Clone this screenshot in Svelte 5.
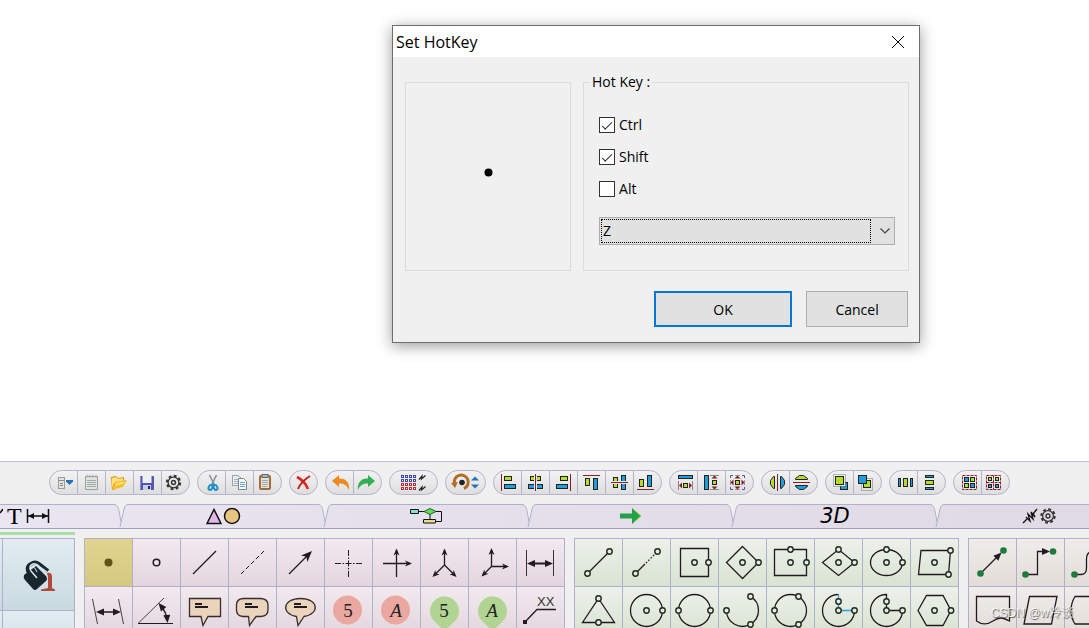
<script lang="ts">
  type Tool = { name: string; art: string };
  type Group = { tools: Tool[]; width?: 'wide' | 'medium' };

  let ctrl = $state(true);
  let shift = $state(true);
  let alt = $state(false);
  let key = $state('Z');
  let open = $state(true);
  let activeTool = $state('Point');

  const keys = 'ABCDEFGHIJKLMNOPQRSTUVWXYZ'.split('');

  const INK = '#222';
  const LIME = '#b4dc28';
  const BLUE = '#1e9fdc';
  const RED = '#8c1c2c';

  const box = (x: number, y: number, w: number, h: number, fill: string) =>
    `<rect x="${x}" y="${y}" width="${w}" height="${h}" fill="${fill}" stroke="${INK}"/>`;
  const path = (d: string, stroke = '#221a20', extra = '') =>
    `<path d="${d}" fill="none" stroke="${stroke}" stroke-width="1.3" ${extra}/>`;
  const thin = (d: string, stroke: string, extra = '') =>
    `<path d="${d}" fill="none" stroke="${stroke}" ${extra}/>`;
  const solid = (d: string, fill = '#221a20') => `<path d="${d}" fill="${fill}"/>`;
  const ring = (x: number, y: number) =>
    `<circle cx="${x}" cy="${y}" r="2.7" fill="#e4ebe0" stroke="#20281c" stroke-width="1.4"/>`;
  const dot = (x: number, y: number) => `<circle cx="${x}" cy="${y}" r="3.3" fill="#1f7a3c"/>`;

  // arrow head with its tip at x, y, pointing right before it is turned
  const head = (x: number, y: number, turn: number) =>
    `<path d="M0 0L-7 -3L-5 0L-7 3Z" fill="#221a20" transform="translate(${x} ${y}) rotate(${turn})"/>`;
  const wedge = (x: number, y: number, turn: number) =>
    `<path d="M0 0L-8 -3.5V3.5Z" fill="#221a20" transform="translate(${x} ${y}) rotate(${turn})"/>`;

  const gear = (x: number, y: number) =>
    `<circle cx="${x}" cy="${y}" r="6.7" fill="none" stroke="#333" stroke-width="2" stroke-dasharray="2.9 2.36"/>` +
    `<circle cx="${x}" cy="${y}" r="5.4" fill="none" stroke="#333" stroke-width="1.3"/>` +
    `<circle cx="${x}" cy="${y}" r="2" fill="none" stroke="#333" stroke-width="1.4"/>`;

  const tri = (x: number, y: number, turn: number, fill = RED) =>
    `<path d="M0 0L-3 -3V3Z" fill="${fill}" transform="translate(${x} ${y}) rotate(${turn})"/>`;

  let gridDots = '';
  for (let row = 0; row < 4; row++) {
    for (let col = 0; col < 4; col++) {
      gridDots += `<rect x="${11.5 + col * 4}" y="${4.5 + row * 4}" width="2" height="2" fill="#f0f0f0" stroke="${row < 2 ? '#3c48a8' : '#b83038'}"/>`;
    }
  }

  const groups: Group[] = [
    {
      tools: [
        { name: 'Menu', art: `<rect x="8.5" y="6.5" width="6" height="11" fill="#e4e4e4" stroke="#999"/><path d="M9 9.5h5M10 12.5h3M10 14.5h3" stroke="#888"/>` + solid('M16 9H23V10.5L19.5 14L16 10.5Z', '#1f74b8') },
        { name: 'New', art: `<path d="M7.5 5.5H19.5V18.5H7.5Z" fill="#dfe3e2" stroke="#9aa09e"/><path d="M9 3.5v3M12 3.5v3M15 3.5v3M18 3.5v3M9 9.5h9M9 11.5h9M9 13.5h9M9 15.5h9" stroke="#a3aaa8"/>` },
        { name: 'Open', art: solid('M5 6L10 5L12 7L18 6V11L8 19H6Z', '#d89a18') + solid('M6 7L10 6L12 8L17 7V10L8 12L6 17Z', '#ffe07a') + solid('M9 11L21 9L17 16L6 19Z', '#f7bc2c') + solid('M10 12L19 10.5L17 13L9 15Z', '#ffdf70') },
        { name: 'Save', art: `<rect x="6" y="5" width="14" height="14" rx="1" fill="#5356ad"/><rect x="8.5" y="5" width="9" height="7" fill="#eef0f8"/><rect x="9" y="14" width="8" height="5" fill="#c9cce8"/><rect x="14" y="15" width="2" height="3" fill="#25285c"/><path d="M6.5 6v12" stroke="#8b8de0"/>` },
        { name: 'Settings', art: gear(11.5, 11.5) }
      ]
    },
    {
      tools: [
        { name: 'Cut', art: `<path d="M11.5 4L16.500 14M18.500 4L13.500 14" stroke="#8a8f9c" stroke-width="1.6"/><ellipse cx="12.5" cy="16.5" rx="1.8" ry="2.5" fill="none" stroke="#2090d0" stroke-width="2" transform="rotate(25 12.5 16.5)"/><ellipse cx="17.5" cy="16.5" rx="1.8" ry="2.5" fill="none" stroke="#2090d0" stroke-width="2" transform="rotate(-25 17.5 16.5)"/><path d="M14 14L15 11L16 14Z" fill="#2090d0"/>` },
        { name: 'Copy', art: `<path d="M6.5 4.5H12L15.5 7.5V14.5H6.5Z" fill="#eef1f3" stroke="#9aa2a8"/><path d="M8 8.5h5M8 10.5h5M8 12.5h5" stroke="#9db4c4"/><path d="M12.5 7.5H17.5L20.5 10.5V18.5H12.5Z" fill="#f5f9fc" stroke="#7c8890"/><path d="M14 11.5h5M14 13.5h5M14 15.5h5" stroke="#6da4cc"/>` },
        { name: 'Paste', art: `<rect x="6" y="5" width="10" height="13" rx="1" fill="#e4e4dc" stroke="#a06c3c" stroke-width="2"/><rect x="8" y="3.5" width="6" height="3" fill="#b8b8b8" stroke="#666"/><path d="M8 9.5h6M8 11.5h6M8 13.5h6M8 15.5h5" stroke="#a0a8a8"/>` }
      ]
    },
    {
      tools: [{ name: 'Delete', art: `<path d="M7 6C11 8 16 13 18 18" stroke="#d82828" stroke-width="2.6" fill="none"/><path d="M20 5C15 8 10 13 8 18" stroke="#c42020" stroke-width="2" fill="none"/>` }]
    },
    {
      tools: [
        { name: 'Undo', art: solid('M6 10L13 4V7.5C20 7 24 12 23 19C21 14 18 12.5 13 12.5V16Z', '#ec8a20') },
        { name: 'Redo', art: solid('M21 10L14 4V7.5C7 7 3 12 4 19C6 14 9 12.5 14 12.5V16Z', '#32b058') }
      ]
    },
    {
      width: 'wide',
      tools: [{ name: 'Grid', art: gridDots + `<path d="M29 8.5L32 5L31.5 8L35.5 4.5M29 19.5L32 16L31.5 19L35.5 15.5" fill="none" stroke="#222" stroke-width="1.2"/>` }]
    },
    {
      width: 'medium',
      tools: [{ name: 'Rotate', art: `<path d="M8.5 13A7 7 0 1 1 18 17.5" fill="none" stroke="#b46c24" stroke-width="3"/><path d="M5 12L12 11L9 17Z" fill="#b46c24"/><circle cx="16" cy="11.5" r="2.8" fill="#222"/>` + solid('M25 9.5L29 5.500L33 9.5ZM25 13.5L29 17.5L33 13.5Z', '#1f74b8') }]
    },
    {
      tools: [
        { name: 'Align left', art: thin('M7.5 3V20', RED) + box(10.5, 5.5, 7, 4, LIME) + box(10.5, 13.5, 11, 4, BLUE) },
        { name: 'Align centre', art: box(8.5, 5.5, 10, 4, LIME) + box(6.5, 13.5, 14, 4, BLUE) + solid('M12 4h3v7h-3ZM12 12h3v7h-3Z', '#e8e8e8') + thin('M13.5 3V20', RED) },
        { name: 'Align right', art: thin('M20.5 3V20', RED) + box(10.5, 5.5, 7, 4, LIME) + box(6.5, 13.5, 11, 4, BLUE) },
        { name: 'Align top', art: thin('M5 4.5H22', RED) + box(7.5, 7.5, 4, 7, LIME) + box(15.5, 7.5, 4, 11, BLUE) },
        { name: 'Align middle', art: box(7.5, 6.5, 4, 10, LIME) + box(15.5, 4.5, 4, 14, BLUE) + solid('M6 10h7v3h-7ZM14 10h7v3h-7Z', '#e8e8e8') + thin('M5 11.5H22', RED) },
        { name: 'Align bottom', art: thin('M3 18.5H20', RED) + box(5.5, 8.5, 4, 7, LIME) + box(13.5, 4.5, 4, 11, BLUE) }
      ]
    },
    {
      tools: [
        { name: 'Same width', art: box(8.5, 4.5, 14, 3, BLUE) + thin('M8.5 10V19M22.5 10V19', '#888') + box(13.5, 12.5, 4, 4, LIME) + tri(9, 14.5, 180) + tri(22, 14.5, 0) },
        { name: 'Same height', art: box(6.5, 4.5, 4, 14, BLUE) + thin('M12 4.5H21M12 18.5H21', '#888') + box(14.5, 9.5, 4, 4, LIME) + tri(16.5, 4.5, 270) + tri(16.5, 18.5, 90) },
        { name: 'Same size', art: thin('M4.5 7V4.5H7M16 4.5H18.5V7M18.5 16V18.5H16M7 18.5H4.5V16', '#5054b8') + thin('M9 4.5h5M9 18.5h5M4.5 9v5M18.5 9v5', '#999') + box(9.5, 9.5, 4, 4, LIME) + tri(11.5, 4.5, 270) + tri(11.5, 18.5, 90) + tri(4.5, 11.5, 180) + tri(18.5, 11.5, 0) }
      ]
    },
    {
      tools: [
        { name: 'Flip horizontal', art: `<path d="M12.5 5.5V17.5H11.5L8.5 13.5V9.5L11.5 5.5Z" fill="${LIME}" stroke="${INK}"/><path d="M18.5 5.5V17.5H19.5L22.5 13.5V9.5L19.5 5.5Z" fill="${BLUE}" stroke="${INK}"/>` + thin('M15.5 3V20', RED) },
        { name: 'Flip vertical', art: `<path d="M5.5 8.5H17.5V7.5L13.5 4.5H9.5L5.5 7.5Z" fill="${LIME}" stroke="${INK}"/><path d="M5.5 14.5H17.5V15.5L13.5 18.5H9.5L5.5 15.5Z" fill="${BLUE}" stroke="${INK}"/>` + thin('M3 11.5H20', RED) }
      ]
    },
    {
      tools: [
        { name: 'Bring to front', art: box(14.5, 11.5, 7, 7, BLUE) + solid('M11 7h8v8h-8Z', '#e8e8e8') + thin('M7.5 3.5H19.5V15.5H7.5Z', '#777', 'stroke-dasharray="1 1"') + box(9.5, 5.5, 8, 8, LIME) },
        { name: 'Send to back', art: thin('M7.5 7.5H18.5V19.5H7.5Z', '#777', 'stroke-dasharray="1 1"') + box(9.5, 9.5, 7, 7, LIME) + box(4.5, 4.5, 8, 8, BLUE) }
      ]
    },
    {
      tools: [
        { name: 'Distribute horizontally', art: box(8.5, 7.5, 2, 8, BLUE) + box(13.5, 7.5, 4, 8, LIME) + box(20.5, 7.5, 2, 8, BLUE) },
        { name: 'Distribute vertically', art: box(7.5, 4.5, 8, 2, BLUE) + box(7.5, 9.5, 8, 4, LIME) + box(7.5, 16.5, 8, 2, BLUE) }
      ]
    },
    {
      tools: [
        { name: 'Group', art: thin('M8.5 4.5H22.5V18.5H8.5Z', RED, 'stroke-dasharray="3 1"') + box(10.5, 6.5, 4, 4, BLUE) + box(16.5, 6.5, 4, 4, LIME) + box(10.5, 12.5, 4, 4, LIME) + box(16.5, 12.5, 4, 4, BLUE) },
        { name: 'Ungroup', art: thin('M4.5 4.5H18.5V18.5H4.5ZM11.5 4.5V18.5M4.5 11.5H18.5', RED, 'stroke-dasharray="3 1"') + box(6.5, 6.5, 3, 3, LIME) + box(13.5, 6.5, 3, 3, LIME) + box(6.5, 13.5, 3, 3, BLUE) + box(13.5, 13.5, 3, 3, BLUE) }
      ]
    }
  ];

  const notes = (x: number) =>
    `<path d="M${x} 17h7M${x} 20h13" stroke="#221a20" stroke-width="2"/>`;
  const bubble = (d: string) => `<path d="${d}" fill="#ead4bc" stroke="#352d30" stroke-width="1.3"/>`;
  const glyph = (text: string, style: string) =>
    `<text x="23" y="29.5" text-anchor="middle" font-family="Liberation Serif, serif" font-size="19" font-style="${style}" fill="#222">${text}</text>`;
  const disc = `<circle cx="22.5" cy="23" r="14.5" fill="#eba8a0"/>`;
  const balloon = `<path d="M13 34A14.5 14.5 0 1 1 34 34L23.5 44Z" fill="#b2d492"/>`;
  const circle = path('M7.5 23.5A16 16 0 0 1 39.5 23.5A16 16 0 0 1 7.5 23.5Z');

  const drawTools: Tool[] = [
    { name: 'Point', art: `<circle cx="23.5" cy="23.5" r="4" fill="#5f5414"/>` },
    { name: 'Open point', art: `<circle cx="23.5" cy="23.5" r="3.3" fill="none" stroke="#221a20" stroke-width="1.5"/>` },
    { name: 'Line', art: path('M12 35L35 12') },
    { name: 'Dashed line', art: thin('M12 35L35 12', '#221a20', 'stroke-dasharray="4.5 2.5"') },
    { name: 'Arrow', art: path('M12 35L30 17') + `<path d="M0 0L-11 -4.5L-8 0L-11 4.5Z" fill="#221a20" transform="translate(35 12) rotate(-45)"/>` },
    { name: 'Centre mark', art: thin('M10 24.5H37M23.5 11V38', '#221a20', 'stroke-dasharray="6 1.5 1.5 1.5 6 1.5 1.5 1.5"') },
    { name: 'Axes', art: path('M10 24.5H37M23.5 38V11') + head(39, 24.5, 0) + head(23.5, 9.5, -90) },
    { name: 'Isometric axes', art: path('M23.5 11V26L13 36.5M23.5 26L34 36.5') + head(23.5, 9.5, -90) + head(11.5, 38, 135) + head(35.5, 38, 45) },
    { name: 'Oblique axes', art: path('M22.5 11V27.5H38M22.5 27.5L14 36') + head(22.5, 9, -90) + head(40, 27.5, 0) + head(12.5, 37.5, 135) },
    { name: 'Dimension', art: thin('M9.5 11V37M36.5 11V37', '#333') + `<path d="M14 24.5H32" stroke="#221a20" stroke-width="2"/>` + wedge(10, 24.5, 180) + wedge(36, 24.5, 0) },
    { name: 'Slanted dimension', art: thin('M7.5 12L12.5 37M33.5 12L38.5 37', '#444') + `<path d="M14 25H32" stroke="#221a20" stroke-width="1.5"/>` + wedge(11, 25, 180) + wedge(36, 25, 0) },
    { name: 'Angle dimension', art: thin('M5 36.5L31 11', '#444') + thin('M5 36.5H40', '#221a20') + path('M28 19Q33 25 34 32') + wedge(25.5, 16, 230) + wedge(34.5, 36, 85) },
    { name: 'Callout', art: bubble('M8.5 11.5H39.5V29.5H27L22 38.5L20 29.5H8.5Z') + notes(14) },
    { name: 'Rounded callout', art: bubble('M14 11.5H32Q39 12 39 18V23Q39 29 32 29.5H27L20.5 38.5L19.5 29.5H14Q7.5 29 7.5 23V18Q7.5 12 14 11.5Z') + notes(16) },
    { name: 'Oval callout', art: bubble('M19.5 29.5C4 27 5 11.5 23.5 11.5S43 27 27 29.5L21 38.5Z') + notes(17) },
    { name: 'Number disc', art: disc + glyph('5', 'normal') },
    { name: 'Letter disc', art: disc + glyph('A', 'italic') },
    { name: 'Number balloon', art: balloon + glyph('5', 'normal') },
    { name: 'Letter balloon', art: balloon + glyph('A', 'italic') },
    { name: 'Leader', art: path('M8 35L20 22.5H39') + solid('M6 33h4v4h-4Z') + `<text x="20" y="19" font-family="Liberation Sans, sans-serif" font-size="13" fill="#333">XX</text>` }
  ];

  const shapeTools: Tool[] = [
    { name: 'Segment', art: path('M12.5 34.5L34.5 12.5') + ring(12.5, 34.5) + ring(34.5, 12.5) },
    { name: 'Dotted segment', art: path('M12.5 34.5L22 25') + path('M23 24L34.5 12.5', '#221a20', 'stroke-dasharray="1.5 1.8"') + ring(12.5, 34.5) + ring(34.5, 12.5) },
    { name: 'Square', art: path('M9.5 9.5H37.5V37.5H9.5Z') + ring(23.5, 23.5) + ring(37.5, 23.5) },
    { name: 'Turned square', art: path('M7.5 23.5L23.5 7.5L39.5 23.5L23.5 39.5Z') + ring(23.5, 23.5) + ring(39.5, 23.5) },
    { name: 'Rectangle', art: path('M7.5 10.5H39.5V36.5H7.5Z') + ring(23.5, 23.5) + ring(23.5, 10.5) + ring(39.5, 23.5) },
    { name: 'Rhombus', art: path('M7.5 23.5L23.5 10.5L39.5 23.5L23.5 36.5Z') + ring(23.5, 23.5) + ring(23.5, 10.5) + ring(39.5, 23.5) },
    { name: 'Ellipse', art: path('M7.5 23.5A16 13 0 0 1 39.5 23.5A16 13 0 0 1 7.5 23.5Z') + ring(23.5, 23.5) + ring(23.5, 10.5) + ring(39.5, 23.5) },
    { name: 'Parallelogram', art: path('M10 11.5H39.5L37.5 35.5H7.5Z') + ring(23.5, 23.5) + ring(39.5, 11.5) + ring(37.5, 35.5) },
    { name: 'Triangle', art: path('M23.5 11.5L39.5 35.5H7.5Z') + ring(23.5, 11.5) + ring(23.5, 35.5) },
    { name: 'Circle', art: circle + ring(23.5, 23.5) + ring(39.5, 23.5) },
    { name: 'Circle by diameter', art: circle + ring(7.5, 23.5) + ring(39.5, 23.5) },
    { name: 'Arc', art: path('M7.5 23.5A16 16 0 1 0 31.5 9.5') + ring(7.5, 23.5) + ring(31.5, 9.5) + ring(31.5, 37.5) },
    { name: 'Circle by points', art: circle + ring(7.5, 23.5) + ring(31.5, 9.5) + ring(31.5, 37.5) },
    { name: 'Centre arc', art: path('M23.5 7.5A16 16 0 1 0 39.5 23.5') + path('M23.5 7.5V23.5H39.5', '#22a4dc') + ring(23.5, 14.5) + ring(23.5, 23.5) + ring(39.5, 23.5) },
    { name: 'Pie', art: path('M23.5 7.5A16 16 0 1 0 39.5 23.5H23.5Z') + ring(23.5, 14.5) + ring(23.5, 23.5) + ring(39.5, 23.5) },
    { name: 'Hexagon', art: path('M7 23.5L15.5 8.5H32L40 23.5L32 38.5H15.5Z') + ring(23.5, 23.5) + ring(40, 23.5) }
  ];

  const linkTools: Tool[] = [
    { name: 'Straight link', art: path('M11.5 34.5L30 16') + wedge(32.5, 13.5, -45) + dot(11.5, 34.5) + dot(34.5, 11.5) },
    { name: 'Elbow link', art: path('M8.5 35.5H20.5V12.5H28') + wedge(33, 12.5, 0) + dot(8.5, 35.5) + dot(36, 12.5) },
    { name: 'Curved link', art: path('M9.5 35.5H16Q21.5 35.5 21.5 29V20Q21.5 12.5 28 12.5') + dot(9.5, 35.5) },
    { name: 'Document', art: path('M7.5 9.5H40.5V34C33 30 30 30 24 34S13 38 7.5 34Z') },
    { name: 'Data', art: path('M12.5 9.5H40L34.5 37H7Z') },
    { name: 'Terminator', art: path('M36 9.5H10Q6 16 6 23.5T10 37H36') }
  ];

  const panels = [
    { id: 'draw', tools: drawTools },
    { id: 'shapes', tools: shapeTools },
    { id: 'links', tools: linkTools }
  ];
</script>

{#snippet notch()}
  <svg class="notch" viewBox="0 0 14 24" aria-hidden="true">
    <path d="M0 .5C4 .5 4 3 6 15L6.5 24L10 5C10.5 2 12 .5 14 .5V0H0Z" fill="#f0f0f0" />
    <path d="M0 .5C3 .5 4 3 5 7L7 18M6 23L10 5C10.5 2 12 .5 14 .5" fill="none" stroke="#b0b0cc" />
  </svg>
{/snippet}

<div class="workspace">
  <main class="canvas">
    {#if open}
      <div class="dialog" role="dialog" aria-labelledby="dialog-title">
        <header class="title-bar">
          <h1 id="dialog-title">Set HotKey</h1>
          <button class="close" aria-label="Close" onclick={() => (open = false)}>
            <svg viewBox="0 0 12 12"><path d="M0 0L12 12M12 0L0 12" stroke="#000" /></svg>
          </button>
        </header>

        <form class="dialog-body" onsubmit={(event) => event.preventDefault()}>
          <div class="settings">
            <div class="preview">
              <svg viewBox="0 0 9 9" aria-hidden="true"><circle cx="4.5" cy="4.5" r="4" /></svg>
            </div>
            <fieldset>
              <legend>Hot Key :</legend>
              <label class="option"><input type="checkbox" bind:checked={ctrl} />Ctrl</label>
              <label class="option"><input type="checkbox" bind:checked={shift} />Shift</label>
              <label class="option"><input type="checkbox" bind:checked={alt} />Alt</label>
              <div class="key-select">
                <select bind:value={key} aria-label="Key">
                  {#each keys as letter}
                    <option value={letter}>{letter}</option>
                  {/each}
                </select>
                <svg viewBox="0 0 10 6" aria-hidden="true">
                  <path d="M.5 .5L5 5L9.5 .5" fill="none" stroke="#444" stroke-width="1.2" />
                </svg>
              </div>
            </fieldset>
          </div>
          <div class="actions">
            <button class="default">OK</button>
            <button type="button" class="cancel" onclick={() => (open = false)}>Cancel</button>
          </div>
        </form>
      </div>
    {/if}
  </main>

  <section class="tools">
    <div class="toolbar" role="toolbar" aria-label="Commands">
      {#each groups as group}
        <div class="group">
          {#each group.tools as tool}
            <button class={group.width} aria-label={tool.name}>
              <svg viewBox="0 0 {group.width === 'wide' ? 47 : group.width === 'medium' ? 39 : 27} 23">
                {@html tool.art}
              </svg>
            </button>
          {/each}
        </div>
      {/each}
    </div>

    <nav class="tabs">
      <button class="tab first">
        <svg class="tab-line" viewBox="0 0 3 16" aria-hidden="true">
          <path d="M0 5L3 1" stroke="#111" stroke-width="1.5" />
        </svg>
        <span class="serif">T</span>
        <svg class="tab-span" viewBox="0 0 24 16" aria-hidden="true">
          <path d="M1.5 1V15M22.5 1V15M2 8H22" stroke="#111" stroke-width="1.5" />
          <path d="M2 8L8 5V11ZM22 8L16 5V11Z" fill="#111" />
        </svg>
      </button>
      {@render notch()}
      <button class="tab" aria-label="Shapes">
        <svg class="tab-shapes" viewBox="0 0 36 18" aria-hidden="true">
          <path d="M2 16.5L9 2.5L16 16.5Z" fill="#e4b8e6" stroke="#111" stroke-width="1.5" />
          <circle cx="27" cy="9" r="7.5" fill="#e8c480" stroke="#111" stroke-width="1.5" />
        </svg>
      </button>
      {@render notch()}
      <button class="tab" aria-label="Flow chart">
        <svg class="tab-flow" viewBox="0 0 34 16" aria-hidden="true">
          <path d="M8 3.5H31.5V13.5H26M20 3V12" fill="none" stroke="#111" />
          <path d="M.5 1.5H8.5V5.5H.5Z" fill="#80e4d0" stroke="#111" />
          <path d="M14 3.5L20 .5L26 3.5L20 6.5Z" fill="#58e058" stroke="#286028" />
          <path d="M13.5 11.5H25.5V15H13.5Z" fill="#e8e088" stroke="#111" />
        </svg>
      </button>
      {@render notch()}
      <button class="tab" aria-label="Arrows">
        <svg class="tab-arrow" viewBox="0 0 22 16" aria-hidden="true">
          <path d="M0 5.5H12V0L21 8L12 16V10.5H0Z" fill="#22a04c" />
          <path d="M12.5 .5L20.5 8L12.5 15.5" fill="none" stroke="#7ccc20" stroke-width=".8" />
        </svg>
      </button>
      {@render notch()}
      <button class="tab three-d">3D</button>
      {@render notch()}
      <button class="tab" aria-label="Components">
        <svg class="tab-parts" viewBox="0 0 34 16" aria-hidden="true">
          <path d="M1 15L5 11M4 9L8 13L6 6L11 11L9 4L13 9L11 5M11 6L15 1" fill="none" stroke="#111" stroke-width="1.3" />
          {@html gear(26, 8)}
        </svg>
      </button>
    </nav>

    <div class="ribbon">
      <div class="styles">
        <div class="swatch edge"></div>
        <button class="swatch" aria-label="Fill">
          <svg viewBox="0 0 34 34">
            <path d="M25 15Q30 14 30 19V30L33 31.5V33H19V31.5L26 30V19Z" fill="#b04a3c" />
            <path d="M2 17Q1 20 3 22L11 31Q13 33 15 31L24 23Q26 21 24 18L14 8Z" fill="#18262e" />
            <path d="M8 17Q3 9 9 6Q13 3 17 6L26 13" fill="none" stroke="#18262e" stroke-width="4" />
            <path d="M15 20L9 13Q6 8 11 6Q14 5 18 9L25 14" fill="none" stroke="#dce8ee" stroke-width="1.4" />
            <path d="M15 14Q13 9 11 9" fill="none" stroke="#dce8ee" stroke-width="1" />
          </svg>
        </button>
        <div class="swatch edge"></div>
        <div class="swatch"></div>
      </div>

      {#each panels as panel}
        <div class="panel {panel.id}">
          {#each panel.tools as tool}
            <button
              class:active={activeTool === tool.name}
              aria-label={tool.name}
              onclick={() => (activeTool = tool.name)}
            >
              <svg viewBox="0 0 47 47">{@html tool.art}</svg>
            </button>
          {/each}
        </div>
      {/each}
    </div>
  </section>

  <div class="watermark">CSDN @w冷谈</div>
</div>

<style>
  :global(body) {
    background: #fff;
    font-family: 'Open Sans', 'Noto Sans', sans-serif;
    color: #000;
  }

  button {
    display: flex;
    align-items: center;
    justify-content: center;
    box-sizing: border-box;
    margin: 0;
    padding: 0;
    border: none;
    background: none;
    font-family: inherit;
    color: inherit;
  }

  svg {
    display: block;
    flex: none;
  }

  .workspace {
    position: relative;
    display: flex;
    flex-direction: column;
    height: 100vh;
    overflow: hidden;
  }

  .canvas {
    position: relative;
    flex: 1;
  }

  /* dialog */
  .dialog {
    position: absolute;
    left: 36%;
    top: 25px;
    box-sizing: border-box;
    width: 528px;
    border: 1px solid #6e6e6e;
    background: #f0f0f0;
    box-shadow: 0 3px 14px rgba(0, 0, 0, 0.4);
    font-size: 14px;
    line-height: 20px;
  }

  .title-bar {
    display: flex;
    align-items: center;
    justify-content: space-between;
    height: 31px;
    padding: 0 15px 0 3px;
    background: #fff;
  }

  h1 {
    margin: 0;
    font-size: 16px;
    font-weight: 400;
  }

  .close svg {
    width: 12px;
    height: 12px;
  }

  .dialog-body {
    padding: 15px 10px 15px 12px;
  }

  .settings {
    display: grid;
    grid-template-columns: 166px 1fr;
    gap: 12px;
  }

  .preview {
    display: flex;
    align-items: center;
    justify-content: center;
    margin-top: 10px;
    padding-bottom: 8px;
    border: 1px solid #dcdcdc;
    box-sizing: border-box;
  }

  .preview svg {
    width: 9px;
    height: 9px;
  }

  fieldset {
    min-width: 0;
    margin: 0;
    padding: 17px 13px 25px 15px;
    border: 1px solid #dcdcdc;
  }

  legend {
    margin-left: -9px;
    padding: 0 2px;
  }

  .option {
    display: flex;
    align-items: center;
    gap: 4px;
    height: 32px;
  }

  .option input {
    appearance: none;
    display: grid;
    place-items: center;
    width: 16px;
    height: 16px;
    margin: 0;
    border: 1px solid #333;
    background: #fff;
  }

  .option input:checked::before {
    content: '';
    width: 9px;
    height: 4px;
    border: solid #333;
    border-width: 0 0 1px 1px;
    transform: translateY(-1px) rotate(-45deg);
  }

  .key-select {
    position: relative;
    margin-top: 12px;
  }

  .key-select::after {
    content: '';
    position: absolute;
    inset: 2px 24px 2px 2px;
    border: 1px dotted #000;
    pointer-events: none;
  }

  .key-select svg {
    position: absolute;
    right: 5px;
    top: 11px;
    width: 10px;
    height: 6px;
    pointer-events: none;
  }

  select {
    appearance: none;
    display: block;
    width: 100%;
    height: 28px;
    padding: 0 3px;
    border: 1px solid #adadad;
    border-radius: 0;
    background: #e1e1e1;
    font: inherit;
    color: inherit;
  }

  .actions {
    display: flex;
    justify-content: flex-end;
    gap: 14px;
    padding: 20px 1px 0 0;
  }

  .actions button {
    width: 102px;
    height: 36px;
    border: 1px solid #adadad;
    background: #e1e1e1;
    font-size: 14px;
  }

  .actions .default {
    width: 138px;
    border: 2px solid #0078d7;
  }

  /* command toolbar */
  .tools {
    border-top: 1px solid #c2c2d6;
    background: #f0f0f0;
  }

  .toolbar {
    display: flex;
    gap: 7px;
    padding: 8px 0 9px 49px;
  }

  .group {
    display: flex;
    flex: none;
    border: 1px solid #b4b4cc;
    border-radius: 13px;
    background: linear-gradient(#f2f2f2, #dedede);
    overflow: hidden;
  }

  .group button {
    width: 27px;
    height: 23px;
  }

  .group button.wide {
    width: 47px;
  }

  .group button.medium {
    width: 39px;
  }

  .group button + button {
    width: 28px;
    border-left: 1px solid #b4b4cc;
  }

  .group svg {
    width: 100%;
    height: 23px;
  }

  /* category tabs */
  .tabs {
    display: flex;
    height: 24px;
    border-bottom: 1px solid #a0a0c0;
    background: linear-gradient(to right, #e9e5f1, #dfdae4);
    overflow: hidden;
  }

  .tab {
    flex: none;
    width: 190px;
    padding-bottom: 2px;
    border-top: 1px solid #b0b0cc;
  }

  .tab.first {
    justify-content: flex-start;
    gap: 4px;
    width: 114px;
  }

  .notch {
    width: 14px;
    height: 24px;
  }

  .serif {
    font-family: 'Liberation Serif', serif;
    font-size: 24px;
    line-height: 24px;
  }

  .three-d {
    font-family: 'DejaVu Sans', sans-serif;
    font-size: 21px;
    font-style: italic;
    line-height: 20px;
  }

  .tab-line {
    width: 3px;
    height: 16px;
  }

  .tab-span {
    width: 24px;
    height: 16px;
  }

  .tab-shapes {
    width: 36px;
    height: 18px;
  }

  .tab-flow {
    width: 34px;
    height: 16px;
  }

  .tab-arrow {
    width: 22px;
    height: 16px;
  }

  .tab-parts {
    width: 34px;
    height: 16px;
  }

  /* tool palette */
  .ribbon {
    display: flex;
    gap: 9px;
    height: 90px;
    padding-top: 9px;
    overflow: hidden;
  }

  .styles {
    display: grid;
    grid-template-columns: 2px 73px;
    grid-template-rows: 72px 72px;
    flex: none;
    align-self: flex-start;
    box-shadow: 0 -3px #f0f0f0, 0 -6px #a8e0a8;
  }

  .swatch {
    border: solid #b0b0cc;
    border-width: 1px 1px 0 1px;
    background: linear-gradient(#e2ecf2, #c8dae0);
  }

  .swatch.edge {
    border-width: 1px 0 0;
  }

  .swatch svg {
    width: 34px;
    height: 34px;
  }

  .panel {
    display: grid;
    grid-auto-rows: 48px;
    flex: none;
    align-self: flex-start;
    border: solid #b0b0cc;
    border-width: 1px 0 0 1px;
  }

  .panel button {
    border: solid #b0b0cc;
    border-width: 0 1px 1px 0;
  }

  .panel svg {
    width: 47px;
    height: 47px;
  }

  .draw {
    grid-template-columns: repeat(10, 48px);
  }

  .draw button {
    background: linear-gradient(#f2eaef, #e2d6dc);
  }

  .draw button.active {
    background: linear-gradient(#e0d490, #d6c880);
  }

  .shapes {
    grid-template-columns: repeat(8, 48px);
  }

  .shapes button {
    background: linear-gradient(#ecf1e9, #d9e3d2);
  }

  .links {
    grid-template-columns: repeat(3, 48px);
  }

  .links button {
    background: linear-gradient(#f0edea, #e2dcd8);
  }

  .watermark {
    position: absolute;
    right: 16px;
    bottom: 5px;
    font-family: 'Liberation Sans', 'Noto Sans CJK SC', sans-serif;
    font-size: 12px;
    line-height: 20px;
    color: rgba(255, 255, 255, 0.8);
    text-shadow: 1px 1px 1px rgba(60, 60, 60, 0.8);
    pointer-events: none;
  }
</style>
